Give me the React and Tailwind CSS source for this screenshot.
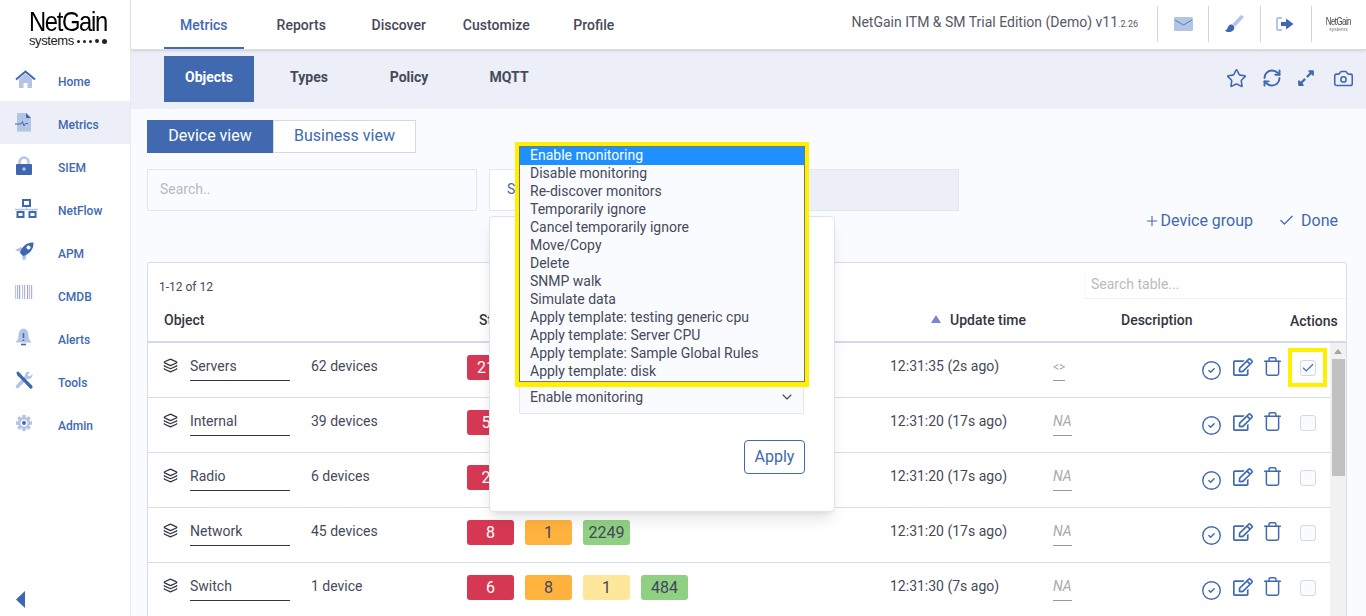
import { Star, RefreshCw, Camera, Layers, ChevronDown, Check, Plus, CircleCheck, Trash } from "lucide-react";
import { FaRegEdit, FaExpandAlt } from "react-icons/fa";

const DARK = "#3f67b1";
const LIGHT = "#b3c4e4";

function HomeIcon() {
  return (
    <svg width="21" height="19" viewBox="0 0 21 19">
      <path d="M4 9 L10.500 3.500 L17 9 V18 H12.500 V13 H8.500 V18 H4 Z" fill={LIGHT} />
      <path d="M1 9.500 L10.500 1.500 L20 9.500" fill="none" stroke={DARK} strokeWidth="2" />
    </svg>
  );
}

function MetricsIcon() {
  return (
    <svg width="21" height="19" viewBox="0 0 21 19">
      <path d="M2 0 H11 L16 5 V18.500 H2 Z" fill={LIGHT} />
      <path d="M11 0 L16 5 H11 Z" fill={DARK} />
      <path d="M0 11 H6 L7.500 8.500 L9 13 L10.500 10.500 H13" fill="none" stroke={DARK} strokeWidth="1" />
    </svg>
  );
}

function LockIcon() {
  return (
    <svg width="21" height="19" viewBox="0 0 21 19">
      <path d="M4.500 9 V6 a4.500 4.500 0 0 1 9 0 V9" fill="none" stroke={LIGHT} strokeWidth="2.400" />
      <rect x="1" y="8" width="16" height="11" rx="1" fill={DARK} />
      <circle cx="9" cy="13" r="1.700" fill={LIGHT} />
    </svg>
  );
}

function NetIcon() {
  return (
    <svg width="24" height="19" viewBox="0 0 24 19">
      <path d="M0 10.500 H23 M11.500 7 V10.500 M5.500 10.500 V13 M17.500 10.500 V13" stroke={LIGHT} strokeWidth="1.300" />
      <rect x="8" y="1" width="7" height="6" fill="none" stroke={DARK} strokeWidth="2" />
      <rect x="2.500" y="13" width="6" height="5" fill="none" stroke={DARK} strokeWidth="2" />
      <rect x="14.500" y="13" width="6" height="5" fill="none" stroke={DARK} strokeWidth="2" />
    </svg>
  );
}

function RocketIcon() {
  return (
    <svg width="20" height="19" viewBox="0 0 20 19">
      <path d="M0 8 L6 5 L8 7 L5 10 Z M7 14 L11 11 L11 17 L8 18.500 Z" fill={LIGHT} />
      <path d="M5 11 C6 6 11 0 18.500 0.500 C19 8 13 13 8 14 Z" fill={DARK} />
      <circle cx="13.500" cy="5.500" r="2" fill="#fff" />
    </svg>
  );
}

function BarcodeIcon() {
  const bars = [0, 2, 4, 7, 9, 12, 14, 16];
  return (
    <svg width="19" height="14" viewBox="0 0 19 14">
      {bars.map((x, i) => (
        <rect key={x} x={x} y="0" width="1.200" height="14" fill={i % 3 === 0 ? "#e3b9c0" : i % 3 === 1 ? "#94bdf0" : "#9fa9c9"} />
      ))}
    </svg>
  );
}

function BellIcon() {
  return (
    <svg width="17" height="19" viewBox="0 0 17 19">
      <path d="M8.500 0.500 C12 1 13.500 4 13.500 8 C13.500 11 15 12.500 16.500 14.500 H0.500 C2 12.500 3.500 11 3.500 8 C3.500 4 5 1 8.500 0.500 Z" fill={LIGHT} />
      <path d="M8.500 5 V10 M8.500 11.500 V13" stroke={DARK} strokeWidth="1.500" />
      <path d="M6 16.500 H11" stroke={DARK} strokeWidth="1.600" />
    </svg>
  );
}

function ToolsIcon() {
  return (
    <svg width="19" height="19" viewBox="0 0 19 19">
      <path d="M17.500 3 L14.500 5.500 L12.500 4 L15 1 C12 0 9.500 2 10 5 L1 14.500 C0 16 1.500 18 3.500 17 L12.500 8 C15.500 8.500 18 6 17.500 3 Z" fill={LIGHT} />
      <path d="M1.500 1 L3.500 0.500 L9 6.500 L17 14.500 C18.500 16 17 18.500 15 17.500 L7 9 L2 4 Z" fill={DARK} />
    </svg>
  );
}

function GearIcon() {
  return (
    <svg width="18" height="18" viewBox="0 0 18 18">
      <path d="M9 1 V17 M1 9 H17 M3.300 3.300 L14.700 14.700 M14.700 3.300 L3.300 14.700" stroke={LIGHT} strokeWidth="3.400" />
      <circle cx="9" cy="9" r="6" fill={LIGHT} />
      <circle cx="9" cy="9" r="3.500" fill="#f4f6fb" />
      <circle cx="9" cy="9" r="1.900" fill={DARK} />
    </svg>
  );
}

const sideItems = [
  { label: "Home", icon: <HomeIcon /> },
  { label: "Metrics", icon: <MetricsIcon />, active: true },
  { label: "SIEM", icon: <LockIcon /> },
  { label: "NetFlow", icon: <NetIcon /> },
  { label: "APM", icon: <RocketIcon /> },
  { label: "CMDB", icon: <BarcodeIcon /> },
  { label: "Alerts", icon: <BellIcon /> },
  { label: "Tools", icon: <ToolsIcon /> },
  { label: "Admin", icon: <GearIcon /> },
];

const topNav = ["Metrics", "Reports", "Discover", "Customize", "Profile"];
const subNav = ["Objects", "Types", "Policy", "MQTT"];

const menuOptions = [
  "Enable monitoring",
  "Disable monitoring",
  "Re-discover monitors",
  "Temporarily ignore",
  "Cancel temporarily ignore",
  "Move/Copy",
  "Delete",
  "SNMP walk",
  "Simulate data",
  "Apply template: testing generic cpu",
  "Apply template: Server CPU",
  "Apply template: Sample Global Rules",
  "Apply template: disk",
];

const rows = [
  { name: "Servers", devices: "62 devices", badges: [["217", "red"]], time: "12:31:35 (2s ago)", desc: "<>", checked: true },
  { name: "Internal", devices: "39 devices", badges: [["50", "red"]], time: "12:31:20 (17s ago)", desc: "NA" },
  { name: "Radio", devices: "6 devices", badges: [["20", "red"]], time: "12:31:20 (17s ago)", desc: "NA" },
  { name: "Network", devices: "45 devices", badges: [["8", "red"], ["1", "orange"], ["2249", "green"]], time: "12:31:20 (17s ago)", desc: "NA" },
  { name: "Switch", devices: "1 device", badges: [["6", "red"], ["8", "orange"], ["1", "yellow"], ["484", "green"]], time: "12:31:30 (7s ago)", desc: "NA" },
];

const badgeColors = {
  red: "bg-[#d63854] text-white",
  orange: "bg-[#ffb23e] text-[#44465a]",
  yellow: "bg-[#fee69a] text-[#44465a]",
  green: "bg-[#90d083] text-[#44465a]",
};

const gridCols = "grid grid-cols-[319px_423px_163px_148px_129px]";

function Sidebar() {
  return (
    <div className="w-[131px] h-full shrink-0 bg-white border-r border-[#e6eaf3] flex flex-col">
      <div className="h-[58px] pl-[29px] pt-[9px] text-black">
        <div className="text-[28px] leading-[25px] tracking-[-1.600px] font-['Liberation_Sans',sans-serif] scale-x-[0.85] origin-left">NetGain</div>
        <div className="flex items-center h-[14px]">
          <span className="text-[13px] leading-[14px] tracking-[-0.400px] text-[#222] font-['Liberation_Sans',sans-serif]">systems</span>
          <span className="flex items-center gap-[3px] ml-[3px]">
            <span className="w-[3px] h-[3px] rounded-full bg-[#222]"></span>
            <span className="w-[3px] h-[3px] rounded-full bg-[#222]"></span>
            <span className="w-[3px] h-[3px] rounded-full bg-[#222]"></span>
            <span className="w-[4px] h-[4px] rounded-full bg-[#222]"></span>
            <span className="w-[5px] h-[5px] rounded-full bg-[#222]"></span>
          </span>
        </div>
      </div>
      {sideItems.map((item) => (
        <div key={item.label} className={`h-[43px] flex items-start ${item.active ? "bg-[#eceff7]" : ""}`}>
          <span className="w-[58px] pl-[15px] pt-[12px] flex items-start">{item.icon}</span>
          <span className="text-xs leading-4 font-medium text-[#4169b0] pt-[16px]">{item.label}</span>
        </div>
      ))}
      <div className="flex-1"></div>
      <div className="pl-[16px] pb-[8px]">
        <svg width="9" height="17" viewBox="0 0 9 17"><path d="M9 0 V17 L0 8.500 Z" fill={DARK} /></svg>
      </div>
    </div>
  );
}

function TopBar() {
  return (
    <div className="h-[50px] shrink-0 bg-white border-b border-[#d9dde8] shadow-sm flex items-stretch pl-[24px] relative z-10">
      {topNav.map((item, i) => (
        <div key={item} className="w-[97.500px] flex flex-col items-center">
          <span className={`flex-1 flex items-center w-[80px] justify-center text-sm font-medium ${i === 0 ? "text-[#4169b0] border-b-2 border-[#4169b0] pt-[2px]" : "text-[#454a59]"}`}>{item}</span>
        </div>
      ))}
      <div className="flex-1"></div>
      <div className="flex items-center">
        <span className="text-sm text-[#555a66] mr-[19px] pb-[6px]">
          NetGain ITM &amp; SM Trial Edition (Demo) v11<span className="text-[9px]">.2.26</span>
        </span>
        <div className="h-[36px] w-[51px] border-l border-[#cdd6e8] flex items-center justify-center mt-[-2px]">
          <svg width="19" height="14" viewBox="0 0 19 14">
            <rect width="19" height="14" rx="1.500" fill={LIGHT} />
            <path d="M1 3 L9.500 8 L18 3" fill="none" stroke={DARK} strokeWidth="0.800" />
          </svg>
        </div>
        <div className="h-[36px] w-[52px] border-l border-[#cdd6e8] flex items-center justify-center mt-[-2px]">
          <svg width="19" height="18" viewBox="0 0 19 18">
            <path d="M15.500 0.500 C17 -0.500 19 1 18.500 2.500 L10.500 11.500 L7.500 9 Z" fill={LIGHT} />
            <path d="M6.500 9.500 C9.500 10 10.500 13.500 8 15.500 C5.500 17.500 2 17.500 0 15.500 C2 15 2 14 3 12 C4 10 5 9.500 6.500 9.500 Z" fill={DARK} />
          </svg>
        </div>
        <div className="h-[36px] w-[51px] border-l border-[#cdd6e8] flex items-center justify-center mt-[-2px] pr-[2px]">
          <svg width="18" height="14" viewBox="0 0 18 14">
            <path d="M6 1 H2.500 A1.500 1.500 0 0 0 1 2.500 V11.500 A1.500 1.500 0 0 0 2.500 13 H6" fill="none" stroke={LIGHT} strokeWidth="2" />
            <path d="M5 5 H10 V1.500 L17.500 7 L10 12.500 V9 H5 Z" fill={DARK} />
          </svg>
        </div>
        <div className="h-[36px] w-[55px] border-l border-[#cdd6e8] flex flex-col items-center justify-center mt-[-2px] pr-[1px]">
          <span className="text-[11px] leading-[10px] tracking-[-0.800px] text-[#444] blur-[0.500px] scale-x-[0.72] font-['Liberation_Sans',sans-serif]">NetGain</span>
          <span className="text-[5px] leading-[6px] text-[#777] blur-[0.500px] font-['Liberation_Sans',sans-serif]">systems</span>
        </div>
      </div>
    </div>
  );
}

function SubBar() {
  return (
    <div className="h-[59px] shrink-0 bg-[#eceff7] flex pl-[33px] pt-[6px]">
      {subNav.map((item, i) => (
        <div key={item} className={`w-[90px] h-[46px] mr-[10px] flex justify-center pt-[11px] text-sm font-bold ${i === 0 ? "bg-[#4169b0] text-white" : "text-[#454a59]"}`}>{item}</div>
      ))}
      <div className="flex-1"></div>
      <div className="flex items-start gap-[15px] pr-[12px] pt-[12px] text-[#4169b0]">
        <Star size={21} strokeWidth={1.800} />
        <RefreshCw size={20} strokeWidth={2.300} />
        <FaExpandAlt size={18} className="mt-[1px]" />
        <Camera size={21} strokeWidth={1.800} className="ml-[3px]" />
      </div>
    </div>
  );
}

function TableRow({ row }) {
  return (
    <div className={`${gridCols} h-[55px] border-b border-[#d5ddee] text-sm text-[#454a59]`}>
      <div className="flex items-start pl-[15px] pt-[13px]">
        <Layers size={15} strokeWidth={2} className="text-[#33363f] mt-[2px] shrink-0" />
        <div className="w-[100px] h-[25px] ml-[12px] border-b border-[#33363f] leading-5 shrink-0">{row.name}</div>
        <div className="ml-[21px] leading-5 whitespace-nowrap">{row.devices}</div>
      </div>
      <div className="flex items-start gap-[11px] pt-[12px]">
        {row.badges.map(([value, color], i) => (
          <span key={i} className={`w-[47px] h-[25px] rounded-[3px] flex items-center justify-center text-base ${badgeColors[color]}`}>{value}</span>
        ))}
      </div>
      <div className="pt-[13px] leading-5">{row.time}</div>
      <div className="pt-[13px]">
        <div className={`w-fit h-[25px] border-b border-[#999] text-[#aaa] ${row.desc === "NA" ? "italic leading-5" : "text-xs leading-[22px]"}`}>{row.desc}</div>
      </div>
      <div className="flex items-start text-[#4169b0]">
        <CircleCheck size={21} strokeWidth={1.600} className="mt-[17px]" />
        <FaRegEdit size={20} className="mt-[14px] ml-[11px]" />
        <Trash size={21} strokeWidth={1.700} className="mt-[13px] ml-[9px]" />
        <div className={`w-[39px] h-[39px] ml-[5px] mt-[5px] flex items-center justify-center border-4 ${row.checked ? "border-[#fff000]" : "border-transparent"}`}>
          <span className="w-[16px] h-[16px] rounded-[3px] border border-[#d5d8e2] bg-[#fafbfe] flex items-center justify-center">
            {row.checked && <Check size={14} strokeWidth={2} />}
          </span>
        </div>
      </div>
    </div>
  );
}

function DataTable() {
  return (
    <div className="mt-[32px] w-[1200px] bg-white border border-[#d5ddee] rounded-[3px] shrink-0">
      <div className="flex h-[36px] pt-[7px]">
        <span className="text-xs text-[#454a59] pl-[11px] pt-[9px]">1-12 of 12</span>
        <div className="flex-1"></div>
        <div className="w-[262px] h-[29px] border-b border-[#eef0f5] border-l border-l-[#f6f7fa] text-sm text-[#bbb] pl-[6px] pt-[4px]">Search table...</div>
      </div>
      <div className={`${gridCols} h-[44px] border-b-2 border-[#d0daee] text-sm font-medium text-[#33363f] w-full`}>
        <div className="pl-[16px] pt-[11px]">Object</div>
        <div className="pl-[12px] pt-[11px]">Status</div>
        <div className="pl-[41px] pt-[11px] flex">
          <svg width="10" height="8" viewBox="0 0 10 8" className="mt-[5px] mr-[9px]"><path d="M5 0 L10 8 H0 Z" fill="#7d83d0" /></svg>
          Update time
        </div>
        <div className="pl-[68px] pt-[11px]">Description</div>
        <div className="pl-[89px] pt-[12px]">Actions</div>
      </div>
      <div className="flex">
        <div className="w-[1182px]">
          {rows.map((row) => <TableRow key={row.name} row={row} />)}
        </div>
        <div className="flex-1 bg-[#f1f1f1] flex flex-col items-center">
          <svg width="8" height="5" viewBox="0 0 8 5" className="mt-[6px]"><path d="M4 0 L8 5 H0 Z" fill="#a3a3a3" /></svg>
          <div className="w-[13px] h-[117px] bg-[#c1c1c1] mt-[5px]"></div>
        </div>
      </div>
    </div>
  );
}

function Content() {
  return (
    <div className="flex-1 min-h-0 bg-[#fafbfe] pl-[16px] pt-[11px] flex flex-col">
      <div className="flex h-[33px] shrink-0 text-base">
        <div className="w-[126px] bg-[#4169b0] text-white flex items-center justify-center pb-[2px]">Device view</div>
        <div className="w-[143px] bg-white text-[#4169b0] border border-[#d5d9e6] flex items-center justify-center pb-[2px]">Business view</div>
      </div>
      <div className="flex mt-[16px] h-[42px] shrink-0">
        <div className="w-[330px] border border-[#e3e6f0] text-sm text-[#b5b9c6] pl-[12px] pb-[2px] flex items-center">Search..</div>
        <div className="w-[300px] ml-[12px] bg-white border border-[#e3e6f0] text-sm text-[#4169b0] pl-[17px] pb-[2px] flex items-center">Search..</div>
        <div className="w-[170px] bg-[#eceff7] border border-[#e3e6f0] border-l-0"></div>
      </div>
      <div className="flex justify-end items-center h-[19px] shrink-0 text-base text-[#4169b0] pr-[28px]">
        <Plus size={16} strokeWidth={1.600} />
        <span className="ml-px">Device group</span>
        <Check size={17} strokeWidth={1.700} className="ml-[25px] mr-[6px]" />
        <span>Done</span>
      </div>
      <DataTable />
    </div>
  );
}

export default function App() {
  return (
    <div className="relative w-[1366px] h-[616px] overflow-hidden flex font-['Roboto',sans-serif]">
      <Sidebar />
      <div className="flex-1 min-w-0 h-full flex flex-col">
        <TopBar />
        <SubBar />
        <Content />
      </div>

      {/* bulk action dialog */}
      <div className="absolute left-[489px] top-[216px] w-[346px] bg-white border border-[#dfe3ee] rounded-[4px] shadow-lg pl-[29px] pr-[30px] pt-[165px] pb-[37px]">
        <div className="h-[32px] bg-[#fafbfe] border-b border-x border-[#e3e6f0] rounded-b-[2px] flex items-center justify-between pl-[10px] pr-[8px] pb-[2px] text-sm text-[#454a59]">
          <span>Enable monitoring</span>
          <ChevronDown size={16} strokeWidth={1.600} />
        </div>
        <div className="flex justify-end mt-[26px] mr-[-1px]">
          <button className="w-[61px] h-[34px] rounded-[4px] border border-[#4169b0] text-base text-[#4169b0]">Apply</button>
        </div>
      </div>

      {/* open select list, highlighted */}
      <div className="absolute left-[515px] top-[142px] w-[294px] border-4 border-b-[5px] border-[#fff000]">
        <div className="bg-[#fafbfe] border border-[#767676] text-sm leading-4 text-[#454a59]">
          {menuOptions.map((opt, i) => (
            <div key={opt} className={`h-[18px] pl-[10px] whitespace-nowrap ${i === 0 ? "bg-[#1e90ff] text-white" : ""}`}>{opt}</div>
          ))}
        </div>
      </div>
    </div>
  );
}
